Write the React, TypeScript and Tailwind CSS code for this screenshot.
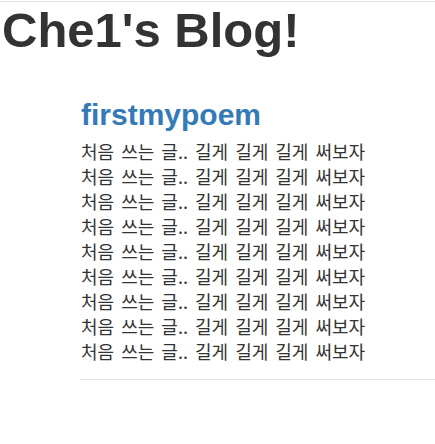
const POEM = "처음 쓰는 글.. 길게 길게 길게 써보자".normalize("NFC");

function PoemLine() {
  const words = POEM.split(" ");
  return (
    <p className="ml-px">
      {words.map((w, i) => (
        <span key={i} className={i < words.length - 1 ? "mr-[3px]" : ""}>
          {w}
          {i < words.length - 1 ? " " : ""}
        </span>
      ))}
    </p>
  );
}

export default function App() {
  return (
    <div className="min-h-screen bg-white text-[#333] font-['Liberation_Sans','Noto_Sans_CJK_KR',sans-serif]">
      <hr className="mt-px border-t border-[#e5e5e5]" />
      <h1 className="ml-[2px] mt-[2px] text-[49px] font-bold leading-[1.1]">Che1's Blog!</h1>
      <div className="ml-[80px] mt-[40px]">
        <h2 className="text-[30px] font-bold leading-[1.1] text-[#337ab7] ml-px">firstmypoem</h2>
        <div className="mt-[8px] text-[18px] leading-[25px] font-['Noto_Sans_CJK_KR',sans-serif]">
          {Array.from({ length: 9 }, (_, i) => (
            <PoemLine key={i} />
          ))}
        </div>
        <hr className="mt-[15px] border-t border-[#e5e5e5]" />
      </div>
    </div>
  );
}
